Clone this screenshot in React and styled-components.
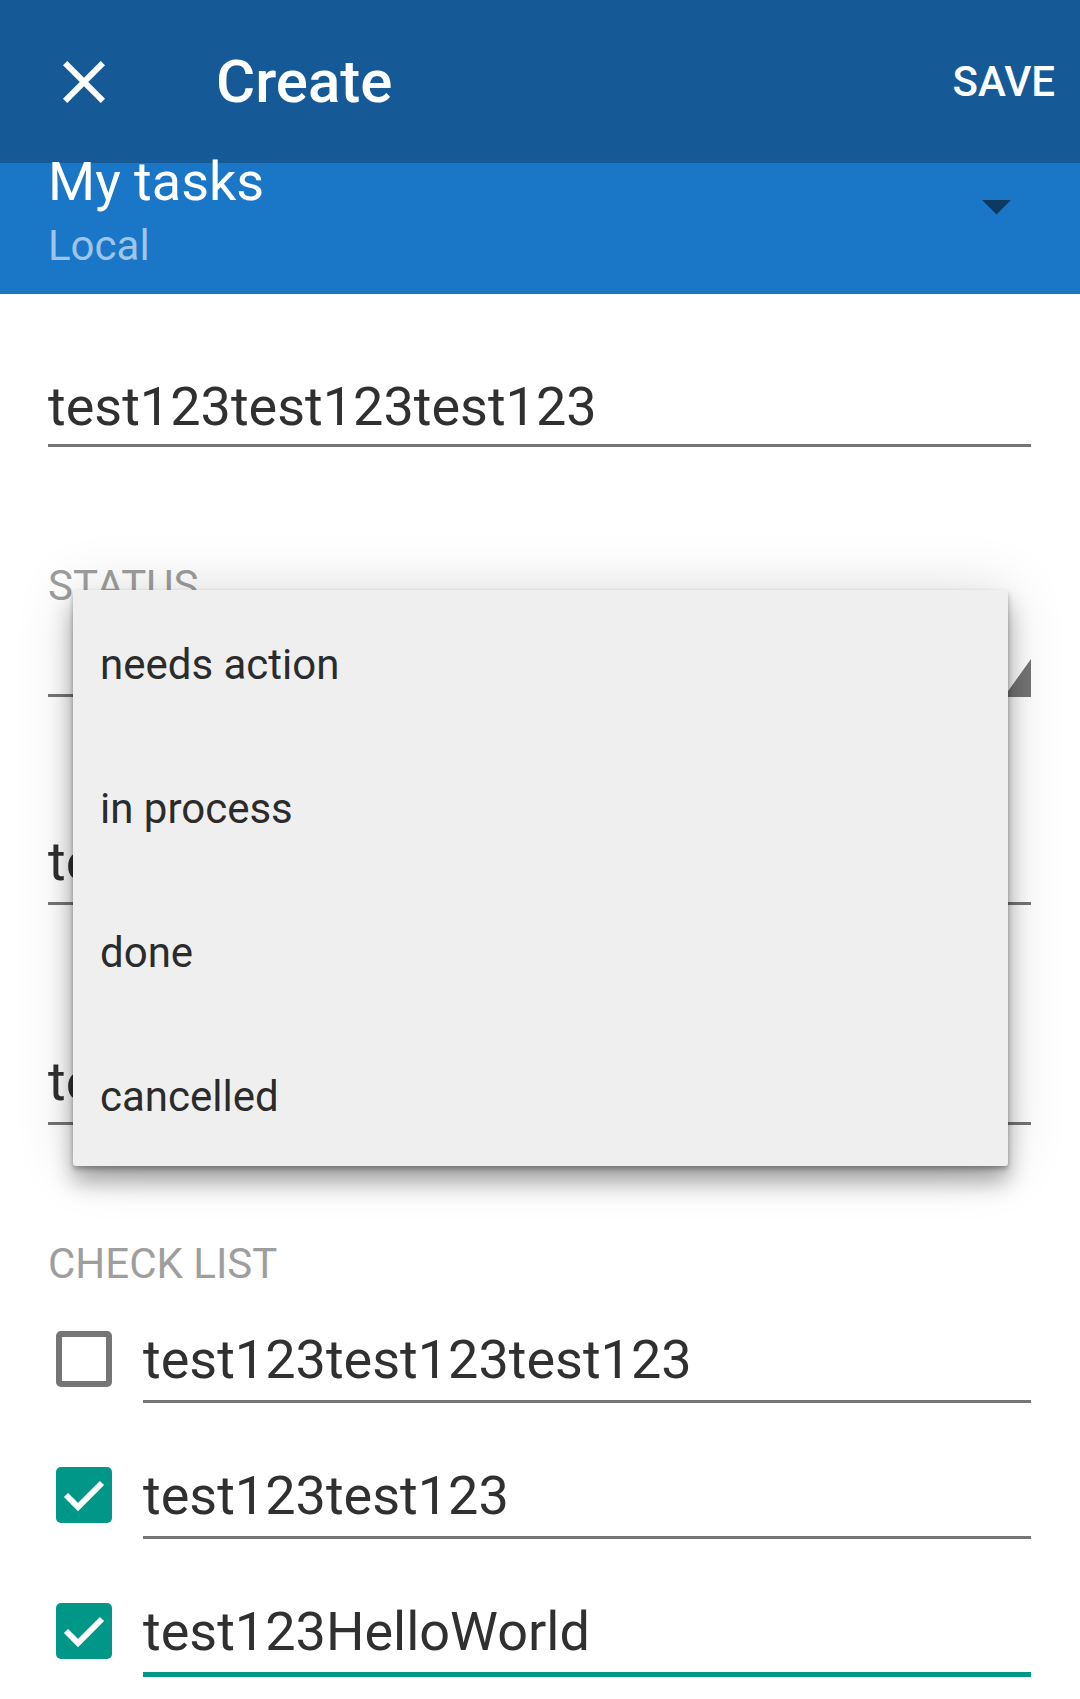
import styled, { createGlobalStyle } from "styled-components";

const GlobalStyle = createGlobalStyle`
  html, body {
    margin: 0;
    padding: 0;
    background: #ffffff;
  }
  body {
    font-family: Roboto, "Noto Sans", "Liberation Sans", sans-serif;
  }
`;

const statusOptions = ["needs action", "in process", "done", "cancelled"];

const checkList = [
  { text: "test123test123test123", done: false },
  { text: "test123test123", done: true },
  { text: "test123HelloWorld", done: true, focus: true },
];

export default function App() {
  return (
    <Page>
      <GlobalStyle />
      <Toolbar>
        <IconButton>
          <svg width="72" height="72" viewBox="0 0 24 24">
            <path
              fill="#ffffff"
              d="M19 6.41L17.59 5 12 10.59 6.41 5 5 6.41 10.59 12 5 17.59 6.41 19 12 13.41 17.59 19 19 17.59 13.41 12z"
            />
          </svg>
        </IconButton>
        <Title>Create</Title>
        <SaveButton>SAVE</SaveButton>
      </Toolbar>

      <AccountBar>
        <AccountInfo>
          <ListName>My tasks</ListName>
          <AccountName>Local</AccountName>
        </AccountInfo>
        <DropArrow>
          <svg width="72" height="72" viewBox="0 0 72 72">
            <path fill="#0e3a60" d="M21 30l14.5 14.5 14.5-14.5z" />
          </svg>
        </DropArrow>
      </AccountBar>

      <Content>
        <Field $top={81} $pad={5}>
          test123test123test123
        </Field>

        <StatusSection>
          <SectionLabel>STATUS</SectionLabel>
          <Spinner>
            <Corner />
          </Spinner>
          <Popup>
            {statusOptions.map((opt) => (
              <PopupItem key={opt}>{opt}</PopupItem>
            ))}
          </Popup>
        </StatusSection>

        <Field $top={133} $pad={8}>
          test123
        </Field>
        <Field $top={145} $pad={8}>
          test123
        </Field>

        <SectionLabel $top={115}>CHECK LIST</SectionLabel>
        {checkList.map((item, i) => (
          <CheckRow key={item.text} $top={i === 0 ? 40 : 61}>
            <CheckBox $checked={item.done}>
              {item.done && (
                <svg width="56" height="56" viewBox="0 0 56 56">
                  <polyline
                    points="10,28 22,40 46,16"
                    fill="none"
                    stroke="#ffffff"
                    strokeWidth="6"
                  />
                </svg>
              )}
            </CheckBox>
            <CheckField $pad={8} $focus={item.focus}>
              {item.text}
            </CheckField>
          </CheckRow>
        ))}
      </Content>
    </Page>
  );
}

const Page = styled.div`
  width: 1080px;
  min-height: 100vh;
  background: #ffffff;
  overflow: hidden;
`;

const Toolbar = styled.header`
  display: flex;
  align-items: center;
  height: 163px;
  padding: 0 25px 0 48px;
  box-sizing: border-box;
  background: #155a96;
  color: #ffffff;
`;

const IconButton = styled.div`
  display: flex;
  width: 72px;
  height: 72px;
`;

const Title = styled.h1`
  margin: 0 0 0 96px;
  font-size: 60px;
  font-weight: 500;
  line-height: 72px;
`;

const SaveButton = styled.div`
  margin-left: auto;
  font-size: 42px;
  font-weight: 500;
  line-height: 48px;
`;

const AccountBar = styled.section`
  display: flex;
  align-items: flex-start;
  height: 131px;
  padding: 0 47px 0 48px;
  box-sizing: border-box;
  background: #1a76c7;
`;

const AccountInfo = styled.div`
  display: flex;
  flex-direction: column;
`;

const ListName = styled.div`
  margin-top: -13px;
  font-size: 54px;
  line-height: 64px;
  color: #ffffff;
`;

const AccountName = styled.div`
  margin-top: 8px;
  font-size: 42px;
  line-height: 48px;
  color: #9fc4ea;
`;

const DropArrow = styled.div`
  display: flex;
  margin: 7px 0 0 auto;
`;

const Content = styled.main`
  display: flex;
  flex-direction: column;
  padding: 0 49px 40px 48px;
`;

const Field = styled.div`
  margin-top: ${(p) => p.$top || 0}px;
  padding-bottom: ${(p) => p.$pad}px;
  font-size: 54px;
  line-height: 64px;
  color: #303030;
  white-space: nowrap;
  overflow: hidden;
  border-bottom: ${(p) => (p.$focus ? "5px solid #009688" : "3px solid #757575")};
`;

const StatusSection = styled.div`
  position: relative;
  margin-top: 115px;
`;

const SectionLabel = styled.div`
  margin-top: ${(p) => p.$top || 0}px;
  font-size: 42px;
  line-height: 48px;
  color: #9e9e9e;
`;

const Spinner = styled.div`
  display: flex;
  justify-content: flex-end;
  align-items: flex-end;
  height: 84px;
  border-bottom: 3px solid #757575;
`;

const Corner = styled.div`
  width: 0;
  height: 0;
  border-left: 25px solid transparent;
  border-bottom: 35px solid #757575;
`;

const Popup = styled.ul`
  position: absolute;
  top: 28px;
  left: 25px;
  right: 23px;
  margin: 0;
  padding: 0;
  list-style: none;
  background: #efefef;
  border-radius: 3px;
  box-shadow: 0 3px 5px rgba(0, 0, 0, 0.3), 0 16px 22px rgba(0, 0, 0, 0.32),
    0 0 60px rgba(0, 0, 0, 0.14);
  z-index: 2;
`;

const PopupItem = styled.li`
  height: 144px;
  box-sizing: border-box;
  padding: 6px 0 0 27px;
  font-size: 42px;
  line-height: 138px;
  color: #2b2b2b;
`;

const CheckRow = styled.div`
  display: flex;
  align-items: flex-start;
  margin-top: ${(p) => p.$top}px;
`;

const CheckBox = styled.div`
  display: flex;
  flex: none;
  width: 56px;
  height: 56px;
  margin: 3px 0 0 8px;
  box-sizing: border-box;
  border-radius: 5px;
  border: ${(p) => (p.$checked ? "none" : "6px solid #757575")};
  background: ${(p) => (p.$checked ? "#009688" : "transparent")};
`;

const CheckField = styled(Field)`
  flex: 1;
  margin-left: 31px;
`;
